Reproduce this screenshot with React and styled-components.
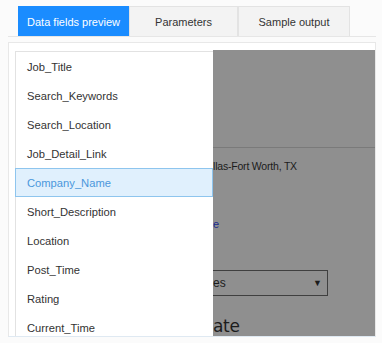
import React from 'react';
import styled, { createGlobalStyle } from 'styled-components';

const Global = createGlobalStyle`
  html, body {
    margin: 0;
    padding: 0;
    background: #fff;
    font-family: "Liberation Sans", Arial, sans-serif;
  }
  #root {
    width: 382px;
    height: 343px;
    overflow: hidden;
  }
`;

const Page = styled.div`
  width: 382px;
  height: 343px;
  overflow: hidden;
  background: #fbfbfb;
`;

const TabBar = styled.div`
  display: flex;
  margin: 0 6px 0 8px;
  padding: 6px 0 0 10px;
  border-bottom: 1px solid #e6e6e6;
`;

const Tab = styled.div`
  width: ${(p) => p.w}px;
  height: 30px;
  display: flex;
  align-items: center;
  justify-content: center;
  font-size: 11px;
  color: ${(p) => (p.active ? '#fff' : '#333')};
  background: ${(p) => (p.active ? '#1a8cff' : '#f3f3f3')};
  border: 1px solid ${(p) => (p.active ? '#1a8cff' : '#e3e3e3')};
  border-bottom: none;
  box-sizing: border-box;
`;

const Panel = styled.div`
  margin: 5px 6px 0 8px;
  height: 295px;
  border: 1px solid #e8e8e8;
  border-bottom: 1px solid #dfe9f2;
  background: #fff;
  display: flex;
  padding: 7px 0 0 6px;
  box-sizing: border-box;
`;

const List = styled.ul`
  list-style: none;
  margin: 1px 0 0;
  padding: 0;
  width: 198px;
  flex: none;
  background: #fff;
  border-left: 1px solid #e2e2e2;
  border-top: 1px solid #e2e2e2;
  box-sizing: border-box;
`;

const Item = styled.li`
  height: 29px;
  display: flex;
  align-items: center;
  padding-left: 11px;
  font-size: 11.2px;
  color: ${(p) => (p.selected ? '#4a97dc' : '#333')};
  background: ${(p) => (p.selected ? '#e0f0fd' : 'transparent')};
  border: 1px solid ${(p) => (p.selected ? '#8ec5ee' : 'transparent')};
  margin-left: -1px;
  box-sizing: border-box;
`;

const Shade = styled.div`
  flex: 1;
  height: 286px;
  background: #8f8f8f;
  overflow: hidden;
  display: flex;
  flex-direction: column;
  color: #1c1c1c;
`;

const Rule = styled.div`
  margin-top: 97px;
  height: 1px;
  background: #7a7a7a;
`;

const City = styled.div`
  margin-top: 12px;
  font-size: 10.5px;
  letter-spacing: -0.2px;
`;

const LinkBit = styled.div`
  margin-top: 46px;
  font-size: 11px;
  color: #1b2a8c;
`;

const Select = styled.div`
  margin-top: 40px;
  width: 115px;
  height: 26px;
  border: 1px solid #3f3f3f;
  border-left: none;
  box-sizing: border-box;
  display: flex;
  align-items: center;
  justify-content: space-between;
  padding-right: 5px;
  font-size: 12px;
`;

const Arrow = styled.span`
  font-size: 9px;
`;

const Heading = styled.div`
  margin-top: 20px;
  font-size: 17px;
  font-family: "DejaVu Sans", sans-serif;
  letter-spacing: -0.3px;
`;

const fields = [
  'Job_Title',
  'Search_Keywords',
  'Search_Location',
  'Job_Detail_Link',
  'Company_Name',
  'Short_Description',
  'Location',
  'Post_Time',
  'Rating',
  'Current_Time',
];

export default function App() {
  return (
    <Page>
      <Global />
      <TabBar>
        <Tab active w={111}>Data fields preview</Tab>
        <Tab w={109}>Parameters</Tab>
        <Tab w={112}>Sample output</Tab>
      </TabBar>
      <Panel>
        <List>
          {fields.map((f) => (
            <Item key={f} selected={f === 'Company_Name'}>
              {f}
            </Item>
          ))}
        </List>
        <Shade>
          <Rule />
          <City>llas-Fort Worth, TX</City>
          <LinkBit>e</LinkBit>
          <Select>
            <span>es</span>
            <Arrow>▼</Arrow>
          </Select>
          <Heading>ate</Heading>
        </Shade>
      </Panel>
    </Page>
  );
}
